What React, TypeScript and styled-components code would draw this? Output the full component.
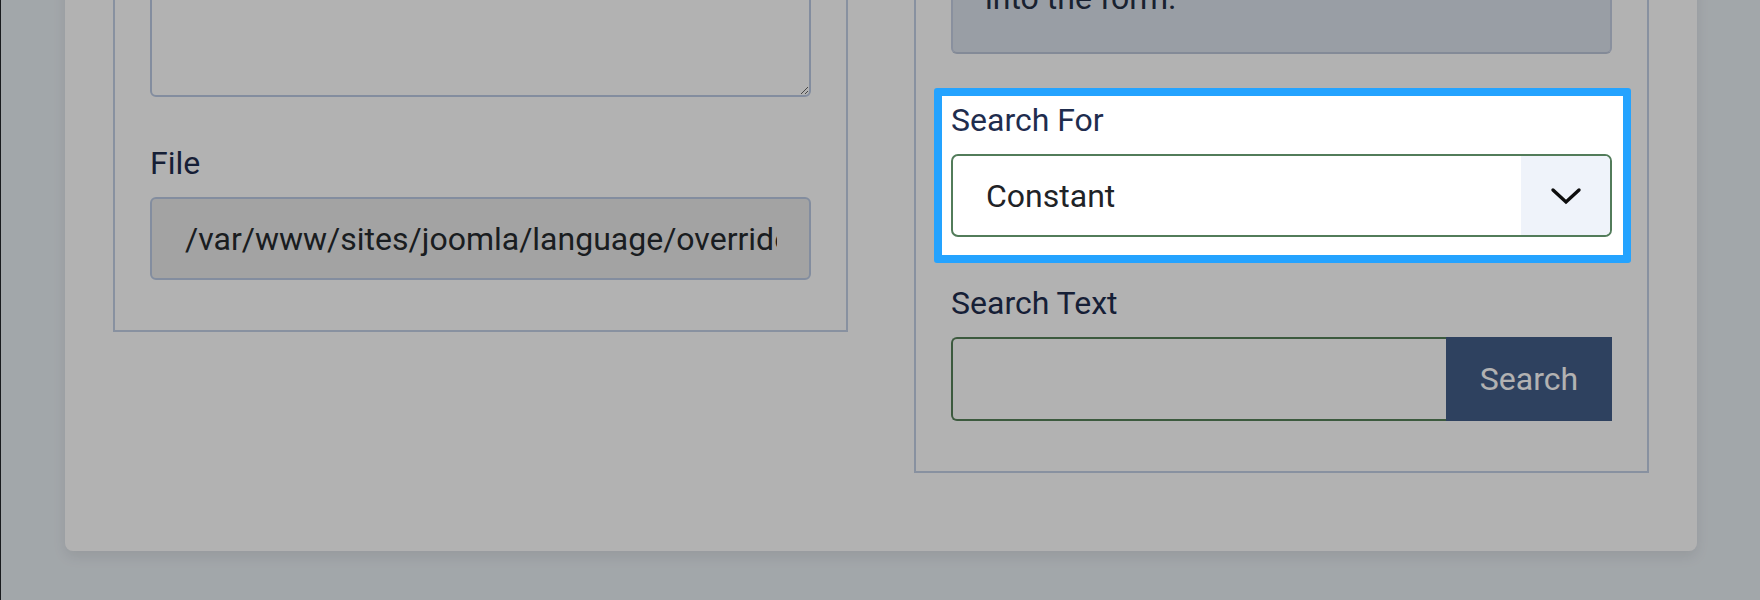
import React from "react";
import styled, { createGlobalStyle } from "styled-components";

const GlobalStyle = createGlobalStyle`
  html, body {
    margin: 0;
    padding: 0;
  }
  body {
    width: 1760px;
    height: 600px;
    overflow: hidden;
    background: #e9eff4;
    font-family: Roboto, "Liberation Sans", Arial, sans-serif;
    font-size: 32px;
    line-height: 1.5;
    color: #22262a;
  }
  * {
    box-sizing: border-box;
  }
`;

const Page = styled.div`
  height: 600px;
  overflow: hidden;
  border-left: 1px solid #24272b;
  padding: 0 63px 0 64px;
`;

// the page is scrolled down, so the card starts above the window
const Card = styled.div`
  margin-top: -241px;
  background: #fff;
  border-radius: 8px;
  box-shadow: 0 6px 14px rgba(0, 0, 0, 0.08);
  padding: 48px 48px 78px 48px;
  display: grid;
  grid-template-columns: 1fr 1fr;
  column-gap: 66px;
  align-items: start;
`;

const Fieldset = styled.div`
  border: 2px solid #c3d0e6;
  padding: 35px 35px 50px 35px;
  display: flex;
  flex-direction: column;
  gap: 42px;
`;

const Group = styled.div`
  display: flex;
  flex-direction: column;
`;

const Label = styled.label`
  display: block;
  color: #1f2d4e;
  font-size: 32px;
  line-height: 48px;
  margin-bottom: 10px;
`;

const TextArea = styled.textarea`
  display: block;
  width: 100%;
  height: 195px;
  border: 2px solid #bccbe4;
  border-radius: 6px;
  background: #fff;
  resize: vertical;
  font: inherit;
`;

const ReadOnlyInput = styled.input`
  display: block;
  width: 100%;
  height: 83px;
  padding: 0 32px 0 33px;
  border: 2px solid #bccbe4;
  border-radius: 6px;
  background: #eaeaea;
  color: #262a2e;
  font: inherit;
  outline: none;
`;

const InfoBox = styled.div`
  height: 210px;
  overflow: hidden;
  padding: 32px 32px 30px;
  background: #dce2ed;
  border: 2px solid #c5cfe2;
  border-bottom-color: #bcc6d8;
  border-radius: 6px;
  color: #253045;
  white-space: nowrap;
`;

const Highlight = styled.div`
  position: relative;
  z-index: 2;
  background: #fff;
  border: 8px solid #24a3ff;
  border-radius: 3px;
  margin: -8px -19px -26px -17px;
  padding: 0 11px 18px 9px;
  display: flex;
  flex-direction: column;
`;

const SelectBox = styled.div`
  display: flex;
  height: 83px;
  border: 2px solid #527c5a;
  border-radius: 7px;
  overflow: hidden;
  background: #fff;
`;

const SelectValue = styled.div`
  flex: 1;
  display: flex;
  align-items: center;
  padding-left: 33px;
  color: #1f2327;
`;

const SelectArrow = styled.div`
  width: 89px;
  background: #eff3fa;
  display: flex;
  align-items: center;
  justify-content: center;
`;

const SearchRow = styled.div`
  display: flex;
  height: 84px;
`;

const SearchInput = styled.input`
  flex: 1;
  min-width: 0;
  height: 100%;
  border: 2px solid #57815a;
  border-right: none;
  border-radius: 6px 0 0 6px;
  background: #fff;
  font: inherit;
  outline: none;
`;

const SearchButton = styled.button`
  width: 166px;
  height: 100%;
  border: none;
  border-radius: 0;
  background: #425d89;
  color: #fff;
  font: inherit;
  font-size: 32px;
`;

const Overlay = styled.div`
  position: fixed;
  inset: 0;
  z-index: 1;
  background: rgba(0, 0, 0, 0.3);
`;

const Chevron = () => (
  <svg width="32" height="20" viewBox="0 0 32 20" fill="none">
    <path
      d="M3 4 L16 16 L29 4"
      stroke="#0d0d0d"
      strokeWidth="3.4"
      strokeLinecap="round"
      strokeLinejoin="miter"
    />
  </svg>
);

export default function App() {
  return (
    <>
      <GlobalStyle />
      <Page>
        <Card>
          <Fieldset>
            <Group>
              <Label>Text</Label>
              <TextArea readOnly defaultValue="" />
            </Group>
            <Group>
              <Label>File</Label>
              <ReadOnlyInput
                readOnly
                value="/var/www/sites/joomla/language/overrides/en-GB.override.ini"
              />
            </Group>
          </Fieldset>

          <Fieldset>
            <InfoBox>
              Search for a constant or a text.
              <br />
              Click a result to insert its text
              <br />
              into the form.
            </InfoBox>
            <Highlight>
              <Label>Search For</Label>
              <SelectBox>
                <SelectValue>Constant</SelectValue>
                <SelectArrow>
                  <Chevron />
                </SelectArrow>
              </SelectBox>
            </Highlight>
            <Group>
              <Label>Search Text</Label>
              <SearchRow>
                <SearchInput type="text" />
                <SearchButton>Search</SearchButton>
              </SearchRow>
            </Group>
          </Fieldset>
        </Card>
      </Page>
      <Overlay />
    </>
  );
}
